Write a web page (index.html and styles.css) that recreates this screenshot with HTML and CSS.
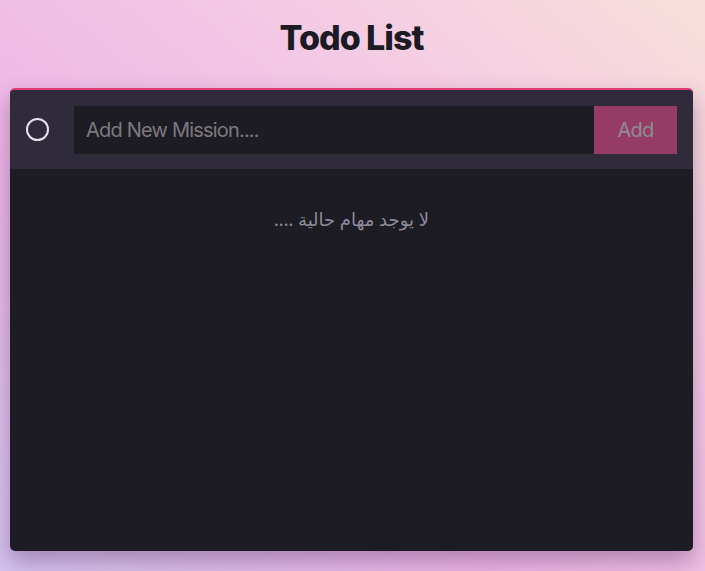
FILE: index.html
```html
<!DOCTYPE html>
<html lang="en">
<head>
<meta charset="utf-8">
<title>Todo List</title>
<link rel="stylesheet" href="styles.css">
</head>
<body>
<main class="page">
  <h1 class="title">Todo List</h1>
  <section class="card">
    <form class="add-bar">
      <span class="check"></span>
      <div class="field">
        <input class="input" type="text" placeholder="Add New Mission....">
        <button class="add-btn" type="button">Add</button>
      </div>
    </form>
    <div class="list">
      <p class="empty" dir="rtl">لا يوجد مهام حالية ....</p>
    </div>
  </section>
</main>
</body>
</html>
```
FILE: styles.css
```css
* { box-sizing: border-box; }
html, body { height: 100%; }
body {
  margin: 0;
  font-family: Inter, "Noto Sans", sans-serif;
  background: linear-gradient(40deg, #d4c4ee 0%, #ecb6e6 35%, #f2c4e6 60%, #f9dfdb 100%);
  overflow: hidden;
}
.page {
  padding: 0 12px 0 10px;
  display: flex;
  flex-direction: column;
}
.title {
  margin: 18px 0 0;
  height: 70px;
  text-align: center;
  font-size: 34px;
  font-weight: 800;
  letter-spacing: -1px;
  color: #1c1a22;
  line-height: 40px;
}
.card {
  height: 463px;
  background: #1d1c24;
  border-top: 2px solid #e23a74;
  border-radius: 5px;
  box-shadow: 0 10px 22px rgba(60, 20, 70, 0.35);
  overflow: hidden;
  display: flex;
  flex-direction: column;
}
.add-bar {
  margin: 0;
  height: 79px;
  background: #2f2b3b;
  display: flex;
  align-items: center;
  padding: 0 16px 0 16px;
}
.check {
  width: 23px;
  height: 23px;
  border: 2px solid #e6e3ee;
  border-radius: 50%;
  margin-right: 25px;
  flex: none;
}
.field {
  flex: 1;
  display: flex;
  height: 48px;
}
.input {
  flex: 1;
  border: 0;
  outline: none;
  background: #1d1c24;
  color: #ccc;
  font-family: Inter, "Noto Sans", sans-serif;
  font-size: 20px;
  letter-spacing: -0.8px;
  padding: 0 12px;
}
.input::placeholder { color: #7c7a7e; }
.add-btn {
  width: 83px;
  border: 0;
  background: #963c64;
  color: #8f8d96;
  font-family: Inter, "Noto Sans", sans-serif;
  font-size: 20px;
  letter-spacing: -0.8px;
}
.list {
  flex: 1;
  padding-top: 38px;
}
.empty {
  margin: 0;
  text-align: center;
  color: #8d8b9b;
  font-family: "Noto Sans", "DejaVu Sans", sans-serif;
  font-size: 18px;
}
```
